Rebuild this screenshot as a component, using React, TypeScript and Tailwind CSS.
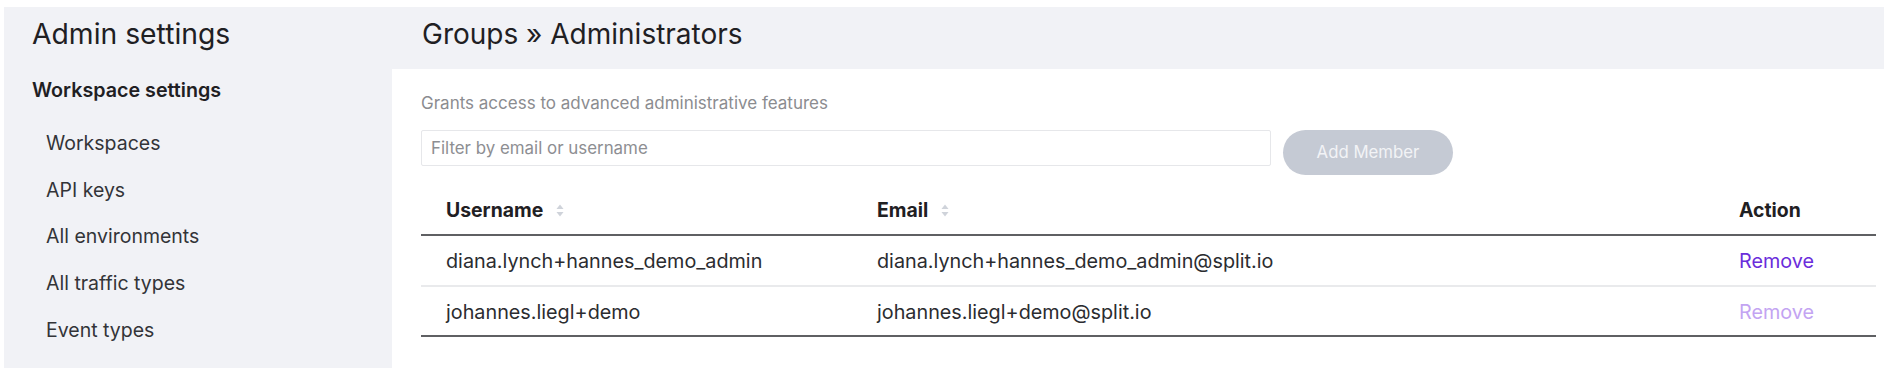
import React from "react";

const font = { fontFamily: "Inter, 'Noto Sans', sans-serif" };

function SortIcon() {
  return (
    <svg width="8" height="13" viewBox="0 0 8 13" className="ml-[13px] inline-block">
      <path d="M4 0.5 L7.5 5 L0.5 5 Z" fill="#cfd3da" />
      <path d="M4 12.5 L7.5 8 L0.5 8 Z" fill="#cfd3da" />
    </svg>
  );
}

const sideItems = ["Workspaces", "API keys", "All environments", "All traffic types", "Event types"];

const rows = [
  { user: "diana.lynch+hannes_demo_admin", email: "diana.lynch+hannes_demo_admin@split.io", active: true },
  { user: "johannes.liegl+demo", email: "johannes.liegl+demo@split.io", active: false },
];

export default function App() {
  return (
    <div className="w-[1884px] h-[368px] bg-white pt-[7px] pl-[4px] overflow-hidden" style={font}>
      <div className="flex flex-col h-full bg-[#f1f2f6]">
        <div className="flex h-[62px] shrink-0 pt-[10px]">
          <div className="w-[388px] pl-[28px] text-[28.3px] leading-[34px] text-[#1f2023]">Admin settings</div>
          <div className="pl-[30px] text-[28px] leading-[34px] text-[#1f2023]">Groups » Administrators</div>
        </div>
        <div className="flex flex-1">
          <div className="w-[388px] shrink-0 pl-[28px] pt-[9px]">
            <div className="text-[19.7px] leading-[24px] font-semibold text-[#1f2023]">Workspace settings</div>
            <div className="mt-[18px] pl-[14px]">
              {sideItems.map((s) => (
                <div key={s} className="h-[46.7px] leading-[47px] text-[19.5px] text-[#333438]">
                  {s}
                </div>
              ))}
            </div>
          </div>
          <div className="flex-1 bg-white pl-[29px] pr-[8px] pt-[24px]">
            <div className="text-[17px] leading-[20px] text-[#8b8c90]">Grants access to advanced administrative features</div>
            <div className="flex items-start gap-[12px] mt-[17px]">
              <div className="w-[850px] h-[36px] border border-[#e6e7ea] rounded-[2px] flex items-center pl-[9px] pt-[2px] text-[16.9px] text-[#8d8e92]">
                Filter by email or username
              </div>
              <div className="w-[170px] h-[45px] rounded-full bg-[#c5cad4] flex items-center justify-center text-[16.8px] text-[#f2f3f6]">
                Add Member
              </div>
            </div>
            <div className="grid grid-cols-[431px_862px_1fr] h-[61px] items-end pb-[12px] border-b-2 border-[#5f6063] text-[19.4px] leading-[24px] font-bold text-[#1f2023]">
              <div className="pl-[25px] flex items-center">
                Username
                <SortIcon />
              </div>
              <div className="pl-[25px] flex items-center">
                Email
                <SortIcon />
              </div>
              <div className="pl-[25px]">Action</div>
            </div>
            {rows.map((r, i) => (
              <div
                key={r.user}
                className={
                  i === 0
                    ? "grid grid-cols-[431px_862px_1fr] h-[51px] pt-[2px] items-center border-b-2 border-[#e9eaec] text-[19.8px] text-[#2b2c30]"
                    : "grid grid-cols-[431px_862px_1fr] h-[50px] pt-[3px] items-center border-b-2 border-[#5f6063] text-[19.8px] text-[#2b2c30]"
                }
              >
                <div className="pl-[25px]">{r.user}</div>
                <div className="pl-[25px]">{r.email}</div>
                <div className={r.active ? "pl-[25px] text-[#6b2ddb]" : "pl-[25px] text-[#c3a4f2]"}>Remove</div>
              </div>
            ))}
          </div>
        </div>
      </div>
    </div>
  );
}
